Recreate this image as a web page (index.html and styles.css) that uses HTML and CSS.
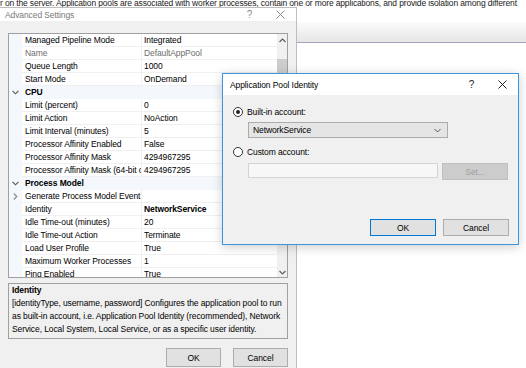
FILE: index.html
```html
<!DOCTYPE html>
<html>
<head>
  <meta charset="utf-8">
  <title>Advanced Settings</title>
  <link rel="stylesheet" href="styles.css">
</head>
<body>
<div class="desk">
  <div class="behind-text">r on the server. Application pools are associated with worker processes, contain one or more applications, and provide isolation among different</div>
  <div class="behind-bar"></div>

  <div class="win win-advanced">
    <div class="titlebar">
      <span class="title">Advanced Settings</span>
      <span class="tb-btn">?</span>
      <span class="tb-btn"><svg width="9" height="9" viewBox="0 0 9 9"><path d="M0.5 0.5L8.5 8.5M8.5 0.5L0.5 8.5" stroke="#8c8c8c" stroke-width="1"/></svg></span>
    </div>
    <div class="win-body">
      <div class="grid">
        <div class="rows">
          <div class="row"><span class="gutter"></span><span class="name">Managed Pipeline Mode</span><span class="value">Integrated</span></div>
          <div class="row dim"><span class="gutter"></span><span class="name">Name</span><span class="value">DefaultAppPool</span></div>
          <div class="row"><span class="gutter"></span><span class="name">Queue Length</span><span class="value">1000</span></div>
          <div class="row"><span class="gutter"></span><span class="name">Start Mode</span><span class="value">OnDemand</span></div>
          <div class="row cat"><span class="gutter"><svg width="7" height="5" viewBox="0 0 7 5"><path d="M0.5 0.8L3.5 3.8L6.5 0.8" fill="none" stroke="#555" stroke-width="1.1"/></svg></span><span class="name">CPU</span></div>
          <div class="row"><span class="gutter"></span><span class="name">Limit (percent)</span><span class="value">0</span></div>
          <div class="row"><span class="gutter"></span><span class="name">Limit Action</span><span class="value">NoAction</span></div>
          <div class="row"><span class="gutter"></span><span class="name">Limit Interval (minutes)</span><span class="value">5</span></div>
          <div class="row"><span class="gutter"></span><span class="name">Processor Affinity Enabled</span><span class="value">False</span></div>
          <div class="row"><span class="gutter"></span><span class="name">Processor Affinity Mask</span><span class="value">4294967295</span></div>
          <div class="row"><span class="gutter"></span><span class="name">Processor Affinity Mask (64-bit option)</span><span class="value">4294967295</span></div>
          <div class="row cat"><span class="gutter"><svg width="7" height="5" viewBox="0 0 7 5"><path d="M0.5 0.8L3.5 3.8L6.5 0.8" fill="none" stroke="#555" stroke-width="1.1"/></svg></span><span class="name">Process Model</span></div>
          <div class="row"><span class="gutter"><svg width="5" height="7" viewBox="0 0 5 7"><path d="M0.8 0.5L3.8 3.5L0.8 6.5" fill="none" stroke="#888" stroke-width="1.1"/></svg></span><span class="name">Generate Process Model Event Log Entry</span><span class="value"></span></div>
          <div class="row"><span class="gutter"></span><span class="name">Identity</span><span class="value strong">NetworkService</span></div>
          <div class="row"><span class="gutter"></span><span class="name">Idle Time-out (minutes)</span><span class="value">20</span></div>
          <div class="row"><span class="gutter"></span><span class="name">Idle Time-out Action</span><span class="value">Terminate</span></div>
          <div class="row"><span class="gutter"></span><span class="name">Load User Profile</span><span class="value">True</span></div>
          <div class="row"><span class="gutter"></span><span class="name">Maximum Worker Processes</span><span class="value">1</span></div>
          <div class="row"><span class="gutter"></span><span class="name">Ping Enabled</span><span class="value">True</span></div>
        </div>
        <div class="scrollbar">
          <span class="arrow"><svg width="7" height="5" viewBox="0 0 7 5"><path d="M0.5 4L3.5 1L6.5 4" fill="none" stroke="#606060" stroke-width="1.2"/></svg></span>
          <span class="thumb"></span>
          <span class="arrow down"><svg width="7" height="5" viewBox="0 0 7 5"><path d="M0.5 1L3.5 4L6.5 1" fill="none" stroke="#606060" stroke-width="1.2"/></svg></span>
        </div>
      </div>
      <div class="desc">
        <div class="desc-title">Identity</div>
        <div class="desc-text">[identityType, username, password] Configures the application pool to run as built-in account, i.e. Application Pool Identity (recommended), Network Service, Local System, Local Service, or as a specific user identity.</div>
      </div>
      <div class="actions">
        <span class="btn">OK</span>
        <span class="btn">Cancel</span>
      </div>
    </div>
  </div>

  <div class="win win-identity">
    <div class="titlebar">
      <span class="title">Application Pool Identity</span>
      <span class="tb-btn">?</span>
      <span class="tb-btn"><svg width="9" height="9" viewBox="0 0 9 9"><path d="M0.5 0.5L8.5 8.5M8.5 0.5L0.5 8.5" stroke="#222" stroke-width="1"/></svg></span>
    </div>
    <div class="win-body">
      <div class="radio-row"><span class="radio checked"></span>Built-in account:</div>
      <div class="select">
        <span>NetworkService</span>
        <svg width="7" height="5" viewBox="0 0 7 5"><path d="M0.5 1L3.5 4L6.5 1" fill="none" stroke="#555" stroke-width="1"/></svg>
      </div>
      <div class="radio-row second"><span class="radio"></span>Custom account:</div>
      <div class="custom-row">
        <span class="textbox"></span>
        <span class="btn off">Set...</span>
      </div>
      <div class="actions">
        <span class="btn main">OK</span>
        <span class="btn">Cancel</span>
      </div>
    </div>
  </div>
</div>
</body>
</html>
```

FILE: styles.css
```css
* {
  box-sizing: border-box;
}
body {
  margin: 0;
  background: #fff;
  font-family: "Liberation Sans", Arial, sans-serif;
  font-size: 8.5px;
  letter-spacing: -0.1px;
  color: #000;
}
.desk {
  position: relative;
  width: 526px;
  height: 368px;
  overflow: hidden;
}
.behind-text {
  margin-top: -3px;
  line-height: 12px;
  white-space: nowrap;
  letter-spacing: -0.15px;
  color: #1a1a1a;
}
.behind-bar {
  margin-top: 13px;
  height: 21px;
  background: linear-gradient(#fbfbfb, #e6e6e6);
  border-bottom: 1px solid #a5a2c0;
}

/* windows */
.win {
  position: absolute;
  display: flex;
  flex-direction: column;
  background: #f0f0f0;
}
.win-advanced {
  left: -2px;
  top: 7px;
  width: 299px;
  height: 372px;
  border: 1px solid #bdbdbd;
}
.win-identity {
  left: 222px;
  top: 73px;
  width: 297px;
  height: 172px;
  border: 1px solid #3d95dd;
  box-shadow: 0 2px 10px rgba(0, 0, 0, 0.2);
}
.titlebar {
  display: flex;
  align-items: center;
  background: #fff;
  height: 13px;
  padding-left: 6px;
}
.win-identity .titlebar {
  height: 21px;
  padding-left: 7px;
}
.title {
  flex: 1;
  color: #7a7a7a;
}
.win-identity .title {
  color: #000;
}
.tb-btn {
  width: 31px;
  display: flex;
  justify-content: center;
  align-items: center;
  font-size: 10px;
  color: #8c8c8c;
}
.win-identity .tb-btn {
  color: #222;
}
.win-body {
  flex: 1;
  display: flex;
  flex-direction: column;
}
.win-advanced .win-body {
  padding: 12px 8px 0 9px;
}

/* property grid */
.grid {
  height: 245px;
  display: flex;
  border: 1px solid #a0a0a0;
  background: #fff;
  overflow: hidden;
}
.rows {
  flex: 1;
  overflow: hidden;
}
.row {
  display: grid;
  grid-template-columns: 13px 120px 1fr;
  height: 13px;
  line-height: 12px;
}
.gutter {
  background: #f4f7fc;
  display: flex;
  align-items: center;
  justify-content: center;
}
.name,
.value {
  white-space: nowrap;
  overflow: hidden;
  border-bottom: 1px solid #f0f0f0;
}
.name {
  padding-left: 3px;
  border-right: 1px solid #f0f0f0;
}
.value {
  padding-left: 2px;
}
.strong {
  font-weight: bold;
}
.dim {
  color: #6d6d6d;
}
.cat .name {
  grid-column: 2 / 4;
  background: #f4f7fc;
  font-weight: bold;
  border: none;
}
.scrollbar {
  width: 10px;
  background: #f0f0f0;
  display: flex;
  flex-direction: column;
}
.arrow {
  height: 13px;
  display: flex;
  align-items: center;
  justify-content: center;
}
.arrow.down {
  margin-top: auto;
  height: 10px;
}
.thumb {
  margin: 12px 0 0 0;
  height: 40px;
  background: #cdcdcd;
}

/* description */
.desc {
  margin-top: 5px;
  height: 56px;
  border: 1px solid #a0a0a0;
  padding: 0 3px;
  line-height: 13px;
}
.desc-title {
  font-weight: bold;
}
.actions {
  display: flex;
  justify-content: flex-end;
  gap: 12px;
  margin-top: 9px;
}
.btn {
  height: 19px;
  width: 55px;
  display: flex;
  align-items: center;
  justify-content: center;
  background: #e1e1e1;
  border: 1px solid #adadad;
}

/* identity dialog */
.win-identity .win-body {
  padding: 11px 9px 8px 10px;
}
.radio-row {
  display: flex;
  align-items: center;
  height: 12px;
  gap: 4px;
}
.radio-row.second {
  margin-top: 8px;
}
.radio {
  width: 10px;
  height: 10px;
  border: 1px solid #333;
  border-radius: 50%;
  background: #fff;
  display: flex;
  align-items: center;
  justify-content: center;
}
.radio.checked::after {
  content: "";
  width: 4px;
  height: 4px;
  border-radius: 50%;
  background: #222;
}
.select {
  margin: 4px 0 0 15px;
  width: 200px;
  height: 16px;
  display: flex;
  align-items: center;
  justify-content: space-between;
  padding: 0 6px 0 4px;
  background: #e5e5e5;
  border: 1px solid #acacac;
}
.custom-row {
  display: flex;
  gap: 4px;
  margin: 5px 0 0 15px;
}
.textbox {
  width: 190px;
  height: 15px;
  background: #f7f7f7;
  border: 1px solid #d4d4d4;
}
.btn.off {
  width: 66px;
  height: 17px;
  background: #cccccc;
  border-color: #bfbfbf;
  color: #a0a0a0;
}
.win-identity .actions {
  margin-top: auto;
  gap: 7px;
}
.win-identity .actions .btn {
  height: 17px;
  width: 66px;
}
.btn.main {
  width: 62px;
  border-color: #0078d7;
}
```
